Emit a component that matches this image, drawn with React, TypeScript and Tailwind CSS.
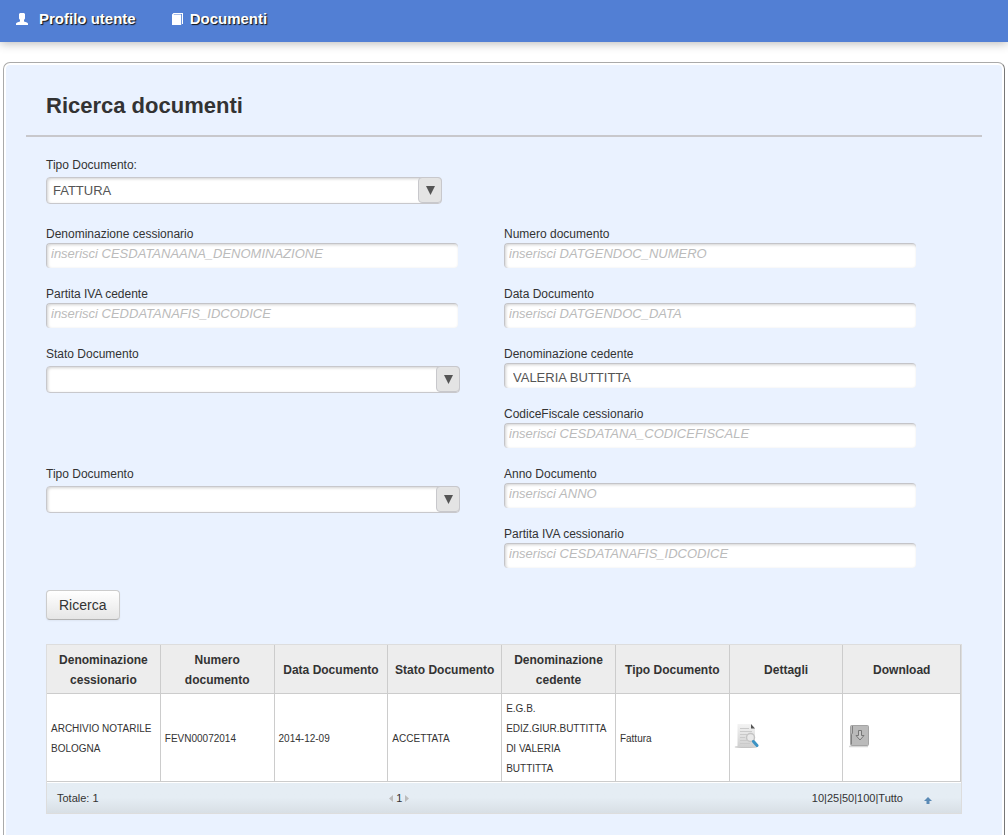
import { useState } from "react";
import type { FormEvent } from "react";

interface FieldProps {
  id: string;
  label: string;
  placeholder?: string;
  defaultValue?: string;
}

interface SelectFieldProps {
  id: string;
  label: string;
  options: string[];
}

interface Documento {
  cessionario: string;
  numero: string;
  data: string;
  stato: string;
  cedente: string;
  tipo: string;
}

const columns = [
  "Denominazione cessionario",
  "Numero documento",
  "Data Documento",
  "Stato Documento",
  "Denominazione cedente",
  "Tipo Documento",
  "Dettagli",
  "Download",
];

const documenti: Documento[] = [
  {
    cessionario: "ARCHIVIO NOTARILE BOLOGNA",
    numero: "FEVN00072014",
    data: "2014-12-09",
    stato: "ACCETTATA",
    cedente: "E.G.B. EDIZ.GIUR.BUTTITTA\nDI VALERIA\nBUTTITTA",
    tipo: "Fattura",
  },
];

const pageSizes = ["10", "25", "50", "100", "Tutto"];

/* ============================================================
   Icone
============================================================ */
function UserIcon() {
  return (
    <svg className="w-3 h-3" viewBox="0 0 12 12" fill="#fff" aria-hidden="true">
      <path d="M4 0h4l1 1v4.500L8 7v1.500l3 1 1 1V12H0v-1.500l1-1 3-1V7L3 5.500V1z" />
    </svg>
  );
}

function BookIcon() {
  return (
    <svg className="w-[11px] h-3" viewBox="0 0 11 12" aria-hidden="true">
      <path d="M0 1.500L1.500 0H11v11h-1V1H2l-.5.500H9.200V12H0z" fill="#fff" />
    </svg>
  );
}

function DetailIcon() {
  return (
    <svg className="inline align-baseline w-[25px] h-[25px]" viewBox="0 0 25 25" aria-hidden="true">
      <defs>
        <linearGradient id="page" x1="0" y1="0" x2="0" y2="1">
          <stop offset="0" stopColor="#f3f3f3" />
          <stop offset="1" stopColor="#d0d0d0" />
        </linearGradient>
      </defs>
      <ellipse cx="12" cy="24" rx="11.500" ry="1" fill="#c4c4c4" />
      <path d="M3.500 1H17l4 4.500V24h-17.500z" fill="url(#page)" />
      <path d="M17 1l4 4.500h-4z" fill="#555" />
      <path d="M6 5.500h9M6 8.500h12M6 11.500h7M6 14.500h5M6 17.500h7M6 20.500h10" stroke="#cacaca" />
      <circle cx="16.500" cy="14.500" r="4" fill="#e9e9e9" stroke="#c4c4c4" strokeWidth="1.500" />
      <path d="M19.500 18.500l3.500 4" stroke="#3b93c4" strokeWidth="3" strokeLinecap="round" />
    </svg>
  );
}

function DownloadIcon() {
  return (
    <svg className="inline align-baseline w-[25px] h-[25px]" viewBox="0 0 25 25" aria-hidden="true">
      <path d="M2 23.500h19" stroke="#d6d6d6" strokeWidth="1.500" />
      <rect x="3.500" y="2.500" width="18" height="20" rx="1" fill="#bababa" stroke="#a4a4a4" />
      <path d="M5.500 3v7l-1 1.500v10" stroke="#808080" fill="none" />
      <path d="M11.500 7.500h3v5H17l-4 4.500-4-4.500h2.500z" fill="#c9c9c9" stroke="#777" />
    </svg>
  );
}

/* ============================================================
   Campi del form
============================================================ */
function TextField({ id, label, placeholder, defaultValue }: FieldProps) {
  return (
    <div className="h-[60px] pr-[46px]">
      <label htmlFor={id} className="block h-5 leading-[22px]">
        {label}
      </label>
      <input
        id={id}
        type="text"
        placeholder={placeholder}
        defaultValue={defaultValue}
        className="block w-full h-[25px] rounded-[4px] border-l border-t border-[#c4c4c8] bg-white pl-2 pr-1 pt-[2px] text-[13px] text-[#555] shadow-[inset_1px_1px_3px_rgba(0,0,0,0.18)] outline-none placeholder:italic placeholder:text-[#bbb] placeholder-shown:pl-1 placeholder-shown:pt-0 placeholder-shown:pb-[6px]"
      />
    </div>
  );
}

function SelectField({ id, label, options }: SelectFieldProps) {
  return (
    <div>
      <label htmlFor={id} className="block h-5 leading-[22px]">
        {label}
      </label>
      <div className="relative mt-[3px]">
        <select
          id={id}
          className="block w-full h-[27px] appearance-none rounded-[4px] border border-[#c8c8cc] bg-white pl-[6px] pr-7 text-[13px] text-[#555] shadow-[inset_1px_1px_3px_rgba(0,0,0,0.18)] outline-none"
        >
          {options.map((o) => (
            <option key={o}>{o}</option>
          ))}
        </select>
        <span className="pointer-events-none absolute right-0 top-0 flex h-[26px] w-6 items-center justify-center rounded-[4px] border border-[#c8c8cc] bg-[#e4e4e4]">
          <svg className="w-[9px] h-[9px]" viewBox="0 0 9 9" fill="#555">
            <path d="M0 0h9L4.500 9z" />
          </svg>
        </span>
      </div>
    </div>
  );
}

export default function App() {
  const [pageSize, setPageSize] = useState("10");

  const handleSubmit = (e: FormEvent) => {
    e.preventDefault();
  };

  return (
    <div className="min-h-screen flex flex-col bg-white font-['Liberation_Sans',Arial,sans-serif] text-[12px] text-[#333]">
      <header className="h-[42px] bg-[#527fd4] shadow-[0_1px_10px_rgba(0,0,0,0.3)]">
        <nav className="flex gap-9 pl-4 text-[15px] leading-[38px] font-bold text-white [text-shadow:1px_1px_1px_#111]">
          <a href="#profilo" className="flex items-center gap-[11px]">
            <UserIcon />
            Profilo utente
          </a>
          <a href="#documenti" className="flex items-center gap-[7px]">
            <BookIcon />
            Documenti
          </a>
        </nav>
      </header>

      <main className="flex-1 flex flex-col px-[3px] pt-5">
        <div className="flex-1 flex flex-col rounded-t-[7px] border border-b-0 border-[#aaa] border-r-[#777] bg-white px-[2px] pt-[2px]">
          <div className="flex-1 rounded-t-[4px] bg-[#eaf2ff] px-5 pb-5">
            <h1 className="border-b-2 border-[#c8c8cc] px-5 pt-[25px] pb-[13px] text-[22px] leading-8 font-bold">
              Ricerca documenti
            </h1>

            <div className="px-5 pt-[17px]">
              <form onSubmit={handleSubmit}>
                <div className="w-[396px]">
                  <SelectField id="categoria" label="Tipo Documento:" options={["FATTURA"]} />
                </div>

                <div className="mt-[19px] grid grid-cols-2">
                  <div>
                    <TextField
                      id="den-cessionario"
                      label="Denominazione cessionario"
                      placeholder="inserisci CESDATANAANA_DENOMINAZIONE"
                    />
                    <TextField
                      id="iva-cedente"
                      label="Partita IVA cedente"
                      placeholder="inserisci CEDDATANAFIS_IDCODICE"
                    />
                    <div className="h-[120px] pr-11">
                      <SelectField id="stato" label="Stato Documento" options={[""]} />
                    </div>
                    <div className="pr-11">
                      <SelectField id="tipo" label="Tipo Documento" options={[""]} />
                    </div>
                  </div>
                  <div>
                    <TextField
                      id="numero"
                      label="Numero documento"
                      placeholder="inserisci DATGENDOC_NUMERO"
                    />
                    <TextField
                      id="data"
                      label="Data Documento"
                      placeholder="inserisci DATGENDOC_DATA"
                    />
                    <TextField
                      id="den-cedente"
                      label="Denominazione cedente"
                      defaultValue="VALERIA BUTTITTA"
                    />
                    <TextField
                      id="cf-cessionario"
                      label="CodiceFiscale cessionario"
                      placeholder="inserisci CESDATANA_CODICEFISCALE"
                    />
                    <TextField id="anno" label="Anno Documento" placeholder="inserisci ANNO" />
                    <TextField
                      id="iva-cessionario"
                      label="Partita IVA cessionario"
                      placeholder="inserisci CESDATANAFIS_IDCODICE"
                    />
                  </div>
                </div>

                <button
                  type="submit"
                  className="mt-[7px] h-[30px] rounded-[4px] border border-[#ccc] border-b-[#b3b3b3] bg-linear-to-b from-white to-[#e6e6e6] pl-3 pr-[13px] text-[14px] shadow-[0_1px_2px_rgba(0,0,0,0.05)]"
                >
                  Ricerca
                </button>
              </form>

              <table className="mt-6 w-full table-fixed border-separate border-spacing-0 border border-[#ddd]">
                <thead>
                  <tr className="bg-[#ededed]">
                    {columns.map((col) => (
                      <th
                        key={col}
                        scope="col"
                        className="w-[12.45%] last:w-auto border-r border-b border-[#ccc] px-1 pt-[5px] pb-[3px] leading-5 font-bold"
                      >
                        {col}
                      </th>
                    ))}
                  </tr>
                </thead>
                <tbody>
                  {documenti.map((doc) => (
                    <tr
                      key={doc.numero}
                      className="bg-white text-[10px] leading-5 [&>td]:border-r [&>td]:border-b [&>td]:border-[#ccc] [&>td]:pl-1 [&>td]:pt-[5px] [&>td]:pb-[2px]"
                    >
                      <td>{doc.cessionario}</td>
                      <td>{doc.numero}</td>
                      <td>{doc.data}</td>
                      <td>{doc.stato}</td>
                      <td className="whitespace-pre-line">{doc.cedente}</td>
                      <td>{doc.tipo}</td>
                      <td>
                        <a href="#dettagli" aria-label="Dettagli">
                          <DetailIcon />
                        </a>
                      </td>
                      <td>
                        <a href="#download" aria-label="Download">
                          <DownloadIcon />
                        </a>
                      </td>
                    </tr>
                  ))}
                </tbody>
                <tfoot>
                  <tr className="bg-linear-to-b from-[#e5edf4] from-50% to-[#d8dfe5] text-[11px] leading-[30px] [&>td]:border-t [&>td]:border-white">
                    <td colSpan={3} className="pl-[10px]">
                      Totale: {documenti.length}
                    </td>
                    <td colSpan={3}>
                      <div className="flex items-center gap-[3px] pl-px">
                        <svg className="w-1 h-[7px]" viewBox="0 0 4 7" fill="#bbb" aria-hidden="true">
                          <path d="M4 0v7L0 3.500z" />
                        </svg>
                        1
                        <svg className="w-1 h-[7px]" viewBox="0 0 4 7" fill="#bbb" aria-hidden="true">
                          <path d="M0 0v7l4-3.500z" />
                        </svg>
                      </div>
                    </td>
                    <td colSpan={2}>
                      <div className="flex items-center justify-end pr-[29px]">
                        {pageSizes.map((size, i) => (
                          <span key={size}>
                            {i > 0 && "|"}
                            <button
                              type="button"
                              aria-pressed={pageSize === size}
                              onClick={() => setPageSize(size)}
                            >
                              {size}
                            </button>
                          </span>
                        ))}
                        <a href="#top" aria-label="Torna su" className="ml-[21px] pt-[5px]">
                          <svg className="w-2 h-[7px]" viewBox="0 0 8 7" fill="#5a8ab5">
                            <path d="M4 0l4 4H5.500v3h-3V4H0z" />
                          </svg>
                        </a>
                      </div>
                    </td>
                  </tr>
                </tfoot>
              </table>
            </div>
          </div>
        </div>
      </main>
    </div>
  );
}
